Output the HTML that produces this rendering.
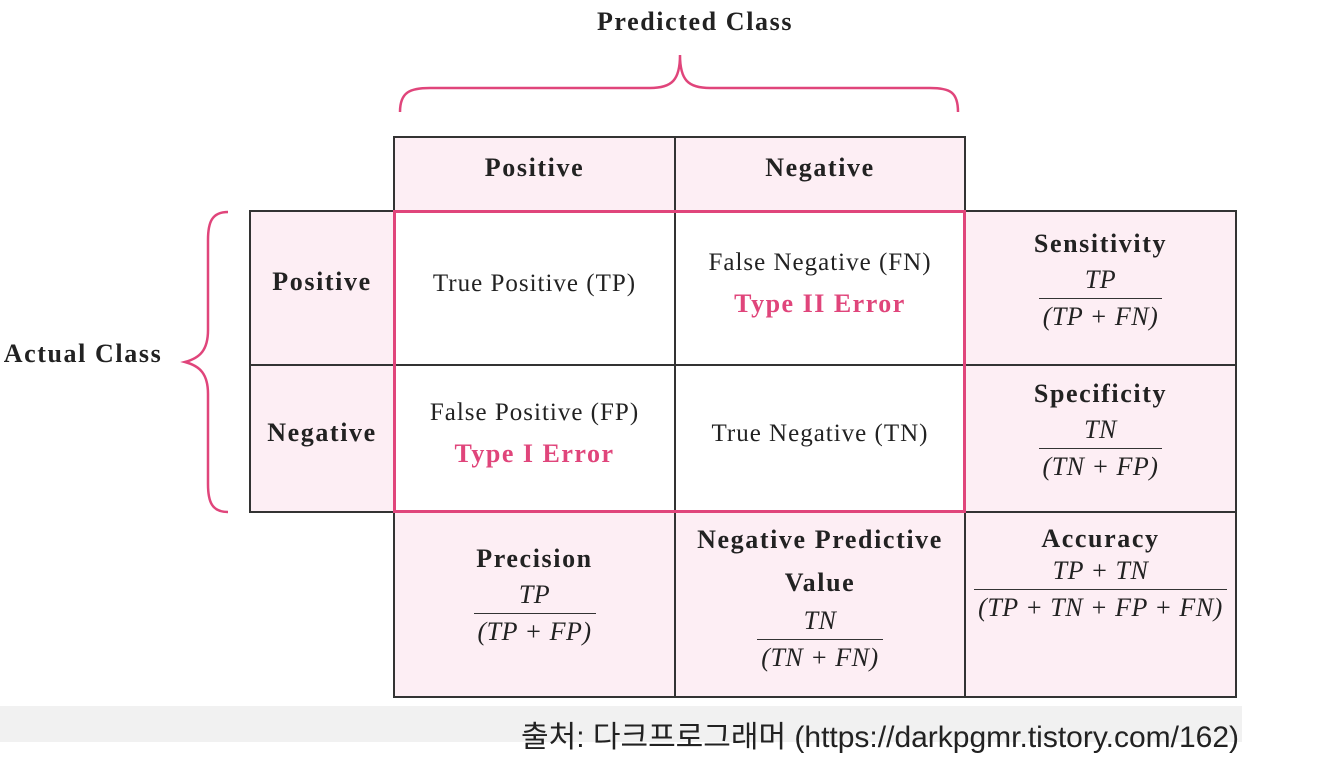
<!DOCTYPE html>
<html><head><meta charset="utf-8"><style>
body{margin:0;width:1326px;height:765px;background:#fff;position:relative;overflow:hidden;font-family:"Liberation Serif",serif;color:#222}
.c{position:absolute;box-sizing:border-box;display:flex;flex-direction:column;align-items:center;justify-content:center;text-align:center;font-size:25px;letter-spacing:1px;padding-bottom:9px}
.p{background:#fdeef4}
.b{font-weight:bold;font-size:26px;letter-spacing:1.6px}
.r{color:#e0457b;font-weight:bold;font-size:26px;letter-spacing:1.5px;margin-top:12px}
.f{font-style:italic;font-size:26px;letter-spacing:0.5px;display:flex;flex-direction:column;align-items:center;margin-top:6px;line-height:30px}
.f .n{padding:0 4px 3px}
.f .d{border-top:1.5px solid #333;padding:3px 4px 0}
.ln{position:absolute;background:#333}
</style></head><body>
<div style="position:absolute;left:0;top:706px;width:1242px;height:36px;background:#f1f1f1"></div>
<div style="position:absolute;left:521px;top:712px;font-family:'Liberation Sans','Noto Sans CJK KR',sans-serif;font-size:30px;color:#222;white-space:nowrap">출처: 다크프로그래머 (https://darkpgmr.tistory.com/162)</div>
<div class="c b" style="left:545px;top:2px;width:300px;height:40px;padding:0">Predicted Class</div>
<div class="c b" style="left:0;top:334px;width:166px;height:40px;padding:0">Actual Class</div>
<svg style="position:absolute;left:0;top:0" width="1326" height="765" fill="none" stroke="#e0457b" stroke-width="2.5">
<path d="M400 112 C400 92 410 88 430 88 L650 88 C672 88 680 80 680 55 C680 80 688 88 710 88 L930 88 C950 88 958 92 958 112"/>
<path d="M228 212 C212 212 208 222 208 240 L208 330 C208 350 200 358 185 362 C200 366 208 374 208 394 L208 484 C208 502 212 512 228 512"/>
</svg>
<div class="c p b" style="left:394px;top:137px;width:281px;height:74px;padding-bottom:12px">Positive</div>
<div class="c p b" style="left:675px;top:137px;width:290px;height:74px;padding-bottom:12px">Negative</div>
<div class="c p b" style="left:250px;top:211px;width:144px;height:154px;padding-bottom:12px">Positive</div>
<div class="c p b" style="left:250px;top:365px;width:144px;height:147px;padding-bottom:12px">Negative</div>
<div class="c" style="left:394px;top:211px;width:281px;height:154px">True Positive (TP)</div>
<div class="c" style="left:675px;top:211px;width:290px;height:154px">False Negative (FN)<div class="r">Type II Error</div></div>
<div class="c" style="left:394px;top:365px;width:281px;height:147px">False Positive (FP)<div class="r">Type I Error</div></div>
<div class="c" style="left:675px;top:365px;width:290px;height:147px">True Negative (TN)</div>
<div class="c p" style="left:965px;top:211px;width:271px;height:154px;justify-content:flex-start;padding-top:18px"><div class="b">Sensitivity</div><div class="f"><span class="n">TP</span><span class="d">(TP + FN)</span></div></div>
<div class="c p" style="left:965px;top:365px;width:271px;height:147px;justify-content:flex-start;padding-top:14px"><div class="b">Specificity</div><div class="f"><span class="n">TN</span><span class="d">(TN + FP)</span></div></div>
<div class="c p" style="left:394px;top:512px;width:281px;height:185px;justify-content:flex-start;padding-top:32px"><div class="b">Precision</div><div class="f"><span class="n">TP</span><span class="d">(TP + FP)</span></div></div>
<div class="c p" style="left:675px;top:512px;width:290px;height:185px;justify-content:flex-start;padding-top:6px"><div class="b" style="line-height:43px">Negative Predictive<br>Value</div><div class="f" style="margin-top:2px"><span class="n">TN</span><span class="d">(TN + FN)</span></div></div>
<div class="c p" style="left:965px;top:512px;width:271px;height:185px;justify-content:flex-start;padding-top:12px"><div class="b">Accuracy</div><div class="f" style="margin-top:2px"><span class="n">TP + TN</span><span class="d">(TP + TN + FP + FN)</span></div></div>
<div class="ln" style="left:394px;top:136px;width:572px;height:2px"></div>
<div class="ln" style="left:249px;top:210px;width:988px;height:2px"></div>
<div class="ln" style="left:249px;top:364px;width:988px;height:2px"></div>
<div class="ln" style="left:249px;top:511px;width:988px;height:2px"></div>
<div class="ln" style="left:394px;top:696px;width:843px;height:2px"></div>
<div class="ln" style="left:249px;top:210px;width:2px;height:303px"></div>
<div class="ln" style="left:393px;top:136px;width:2px;height:562px"></div>
<div class="ln" style="left:674px;top:136px;width:2px;height:562px"></div>
<div class="ln" style="left:964px;top:136px;width:2px;height:562px"></div>
<div class="ln" style="left:1235px;top:210px;width:2px;height:488px"></div>
<div style="position:absolute;left:393px;top:210px;width:573px;height:303px;box-sizing:border-box;border:3px solid #e0457b"></div>
</body></html>
